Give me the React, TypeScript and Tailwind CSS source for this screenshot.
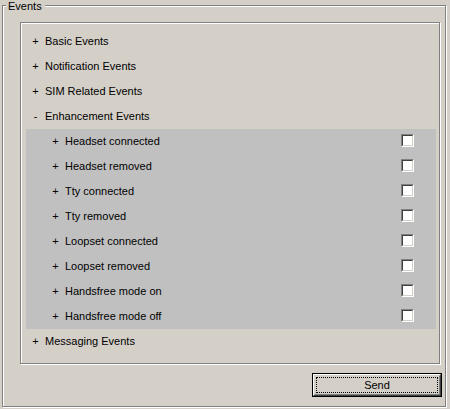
import React from "react";

const font = { fontFamily: '"Liberation Sans", Arial, sans-serif' };

function Checkbox() {
  return (
    <div className="mb-[2px] h-[13px] w-[13px] border border-t-[#808080] border-l-[#808080] border-b-white border-r-white">
      <div className="h-full w-full border border-t-[#404040] border-l-[#404040] border-b-[#d4d0c8] border-r-[#d4d0c8] bg-white" />
    </div>
  );
}

function TopRow({ label, open }: { label: string; open?: boolean }) {
  return (
    <div className="flex h-[25px] items-center pl-[11px]">
      <span className="w-[7px] text-center">{open ? "-" : "+"}</span>
      <span className="ml-[6px]">{label}</span>
    </div>
  );
}

function ChildRow({ label }: { label: string }) {
  return (
    <div className="flex h-[25px] items-center pl-[26px] pr-[22px]">
      <span className="w-[7px] text-center">+</span>
      <span className="ml-[6px]">{label}</span>
      <div className="ml-auto">
        <Checkbox />
      </div>
    </div>
  );
}

export default function App() {
  const children = [
    "Headset connected",
    "Headset removed",
    "Tty connected",
    "Tty removed",
    "Loopset connected",
    "Loopset removed",
    "Handsfree mode on",
    "Handsfree mode off",
  ];
  return (
    <div
      className="h-[409px] w-[450px] overflow-hidden bg-[#d4d0c8] text-[11px] leading-[13px] text-black"
      style={font}
    >
      <div className="relative ml-[2px] mt-[5px] flex h-[402px] w-[444px] flex-col border border-[#808080] shadow-[inset_1px_1px_0_#fff,1px_1px_0_#fff]">
        <span className="absolute left-[3px] top-[-6px] bg-[#d4d0c8] pl-[2px] pr-[3px]">
          Events
        </span>
        <div className="ml-[17px] mt-[16px] flex h-[342px] w-[420px] flex-col border border-[#808080] pt-[6px] shadow-[inset_1px_1px_0_#fff,1px_1px_0_#fff]">
          <TopRow label="Basic Events" />
          <TopRow label="Notification Events" />
          <TopRow label="SIM Related Events" />
          <TopRow label="Enhancement Events" open />
          <div className="ml-[5px] w-[410px] bg-[#c0c0c0]">
            {children.map((c) => (
              <ChildRow key={c} label={c} />
            ))}
          </div>
          <TopRow label="Messaging Events" />
        </div>
        <div className="mr-[3px] mt-[9px] flex justify-end">
          <button className="h-[24px] w-[130px] border border-black bg-[#d4d0c8] p-0">
            <div className="h-full w-full border border-t-white border-l-white border-b-[#404040] border-r-[#404040]">
              <div className="h-full w-full border border-t-[#d4d0c8] border-l-[#d4d0c8] border-b-[#808080] border-r-[#808080] p-[1px]">
                <div className="flex h-full w-full items-center justify-center border border-dotted border-black">
                  Send
                </div>
              </div>
            </div>
          </button>
        </div>
      </div>
    </div>
  );
}
